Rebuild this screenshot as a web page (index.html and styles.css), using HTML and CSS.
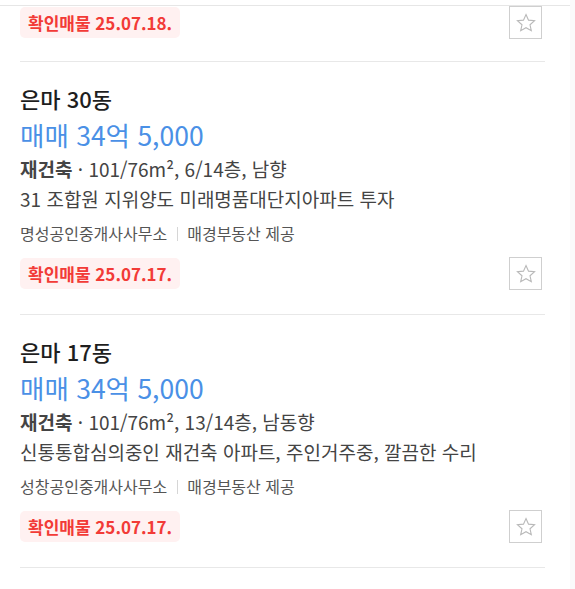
FILE: index.html
```html
<!DOCTYPE html>
<html lang="ko">
<head>
<meta charset="utf-8">
<link rel="stylesheet" href="styles.css">
</head>
<body>
<div class="topline"></div>
<div class="list">
  <div class="item item-partial">
    <div class="bottom-row first-row">
      <span class="badge">확인매물 25.07.18.</span>
      <button class="star" aria-label="관심"><svg viewBox="0 0 24 24" width="22" height="22"><path d="M12 2.8l2.75 6.1 6.6.65-4.98 4.42 1.45 6.5L12 17.1l-5.82 3.37 1.45-6.5L2.65 9.55l6.6-.65z" fill="none" stroke="#b9b9b9" stroke-width="1.2" stroke-linejoin="miter"/></svg></button>
    </div>
  </div>
  <div class="item">
    <div class="title">은마 30동</div>
    <div class="price">매매 34억 5,000</div>
    <div class="spec"><b>재건축</b> · 101/76m², 6/14층, 남향</div>
    <div class="desc">31 조합원 지위양도 미래명품대단지아파트 투자</div>
    <div class="agent"><span>명성공인중개사사무소</span><i class="sep"></i><span>매경부동산 제공</span></div>
    <div class="bottom-row">
      <span class="badge">확인매물 25.07.17.</span>
      <button class="star" aria-label="관심"><svg viewBox="0 0 24 24" width="22" height="22"><path d="M12 2.8l2.75 6.1 6.6.65-4.98 4.42 1.45 6.5L12 17.1l-5.82 3.37 1.45-6.5L2.65 9.55l6.6-.65z" fill="none" stroke="#b9b9b9" stroke-width="1.2" stroke-linejoin="miter"/></svg></button>
    </div>
  </div>
  <div class="item">
    <div class="title">은마 17동</div>
    <div class="price">매매 34억 5,000</div>
    <div class="spec"><b>재건축</b> · 101/76m², 13/14층, 남동향</div>
    <div class="desc">신통통합심의중인 재건축 아파트, 주인거주중, 깔끔한 수리</div>
    <div class="agent"><span>성창공인중개사사무소</span><i class="sep"></i><span>매경부동산 제공</span></div>
    <div class="bottom-row">
      <span class="badge">확인매물 25.07.17.</span>
      <button class="star" aria-label="관심"><svg viewBox="0 0 24 24" width="22" height="22"><path d="M12 2.8l2.75 6.1 6.6.65-4.98 4.42 1.45 6.5L12 17.1l-5.82 3.37 1.45-6.5L2.65 9.55l6.6-.65z" fill="none" stroke="#b9b9b9" stroke-width="1.2" stroke-linejoin="miter"/></svg></button>
    </div>
  </div>
</div>
</body>
</html>
```
FILE: styles.css
```css
html, body {
  margin: 0;
  padding: 0;
  background: #fff;
}
body {
  font-family: "Noto Sans CJK KR", "Noto Sans", sans-serif;
  color: #222;
  width: 570px;
  border-right: 5px solid #fafafa;
  min-height: 589px;
}
.topline {
  height: 5px;
  border-bottom: 1px solid #e6e6e6;
}
.list {
  padding: 0 25px 0 20px;
}
.item {
  border-bottom: 1px solid #e8e8e8;
  padding: 22px 0 24px;
}
.item-partial {
  padding: 0 0 22px;
}
.title {
  font-size: 22px;
  line-height: 28px;
  font-weight: 500;
  color: #1e1e1e;
}
.price {
  margin-top: 7px;
  font-size: 26.5px;
  line-height: 32px;
  color: #4a90e6;
}
.spec, .desc {
  font-size: 19px;
  line-height: 30px;
  color: #444;
}
.spec {
  margin-top: 3px;
}
.spec b {
  font-weight: 700;
}
.agent {
  margin-top: 9px;
  font-size: 16px;
  line-height: 20px;
  color: #555;
  display: flex;
  align-items: center;
}
.sep {
  display: inline-block;
  width: 1px;
  height: 14px;
  background: #d6d6d6;
  margin: 2px 9px 0 10px;
}
.bottom-row {
  margin-top: 14px;
  display: flex;
  justify-content: space-between;
  align-items: center;
}
.first-row {
  margin-top: 0;
}
.badge {
  display: inline-block;
  height: 31px;
  line-height: 31px;
  padding: 0 8px;
  border-radius: 5px;
  background: #fff1f1;
  color: #f23b37;
  font-size: 17px;
  font-weight: 700;
}
.star {
  box-sizing: border-box;
  width: 33px;
  height: 33px;
  margin-right: 3px;
  border: 1px solid #cfcfcf;
  background: #fff;
  padding: 0;
  display: flex;
  align-items: center;
  justify-content: center;
}
.star svg {
  display: block;
}
```
